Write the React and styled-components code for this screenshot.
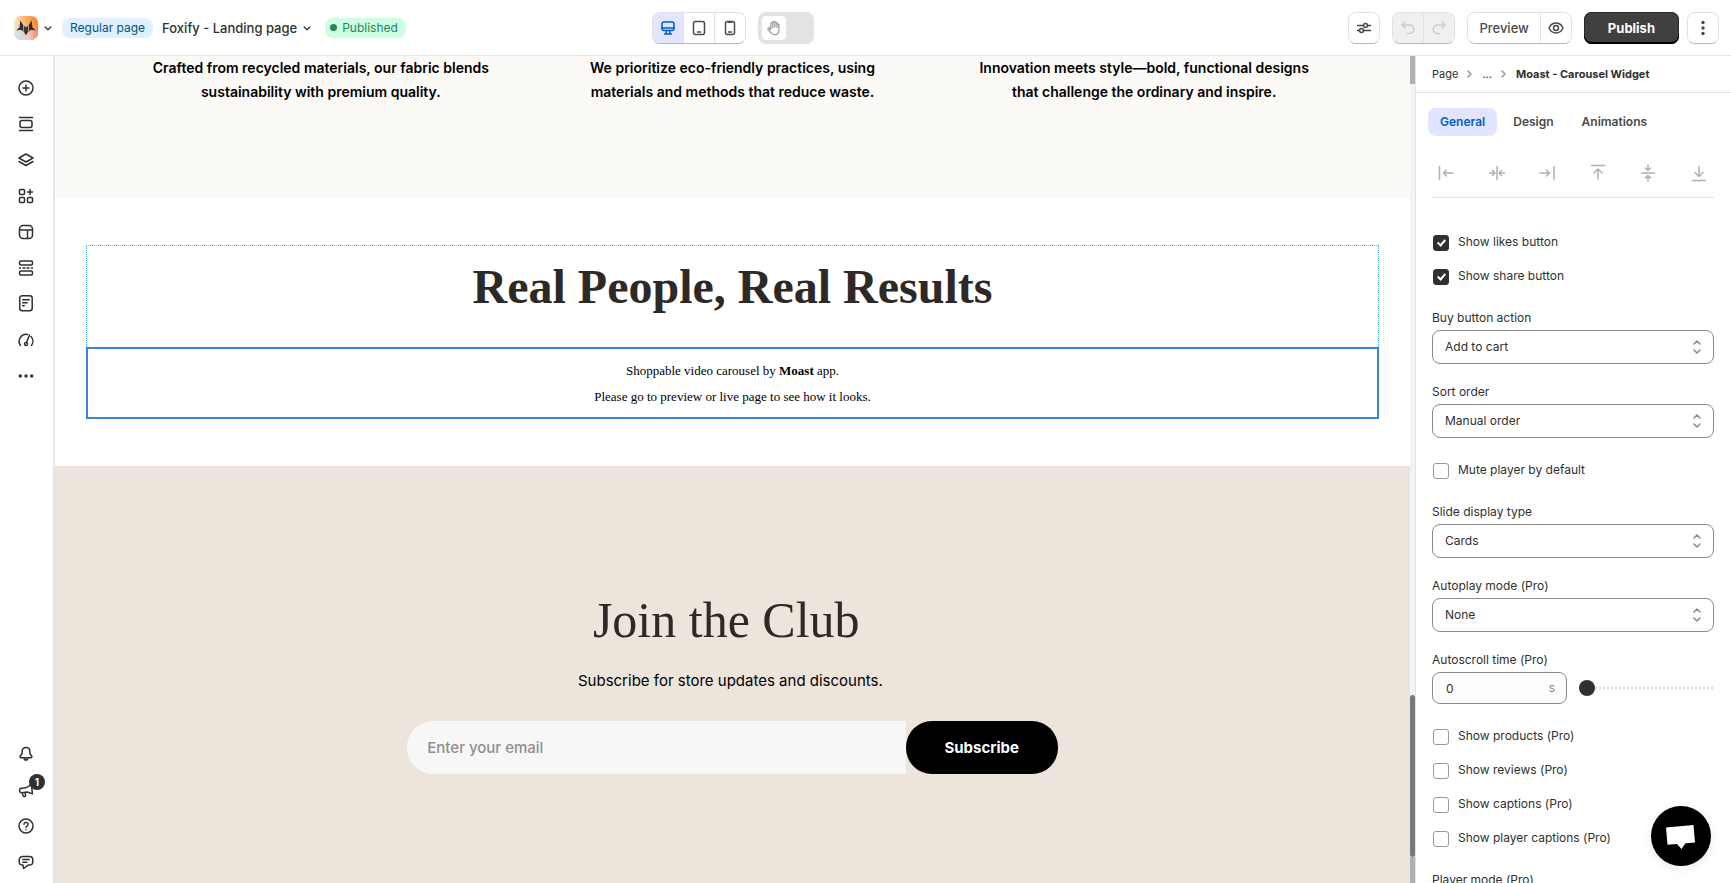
import { useState } from "react";
import styled, { createGlobalStyle } from "styled-components";

const GlobalStyle = createGlobalStyle`
  *, *::before, *::after { box-sizing: border-box; }
  body {
    margin: 0;
    font-family: "Inter", Arial, Helvetica, sans-serif;
    font-size: 12px;
    line-height: 20px;
    color: #303030;
    background: #ffffff;
  }
  button, input, select { font-family: inherit; color: inherit; margin: 0; }
  h1, h2, p { margin: 0; }
`;

const Shell = styled.div`
  display: flex;
  flex-direction: column;
  height: 100vh;
  overflow: hidden;
`;

/* ---------- header ---------- */

const Header = styled.header`
  display: grid;
  grid-template-columns: 12fr auto 17fr;
  align-items: center;
  flex: none;
  height: 56px;
  padding: 0 12px 0 14px;
  border-bottom: 1px solid #e3e3e3;
`;

const HeaderLeft = styled.div`
  display: flex;
  align-items: center;
  gap: 9px;
`;

const HeaderCenter = styled.div`
  display: flex;
  gap: 12px;
`;

const HeaderRight = styled.div`
  display: flex;
  justify-content: flex-end;
  gap: 12px;
`;

const MenuButton = styled.button`
  display: flex;
  align-items: center;
  gap: 5px;
  padding: 0;
  border: 0;
  background: none;
  font-size: 13px;
  font-weight: 500;
  line-height: 20px;
`;

const Pill = styled.span`
  display: flex;
  align-items: center;
  gap: 5px;
  height: 20px;
  margin-left: ${(p) => (p.$tone === "success" ? "4px" : "0")};
  padding: ${(p) => (p.$tone === "success" ? "0 8px 0 5px" : "0 8px")};
  border-radius: 8px;
  font-size: 12px;
  background: ${(p) => (p.$tone === "success" ? "#cdfee1" : "#e0f0ff")};
  color: ${(p) => (p.$tone === "success" ? "#29845a" : "#00527c")};
`;

const Dot = styled.span`
  width: 7px;
  height: 7px;
  border-radius: 50%;
  background: #29845a;
`;

const Group = styled.div`
  display: flex;
  height: 32px;
  border: 1px solid #e0e0e0;
  border-bottom-color: #b5b5b5;
  border-radius: 8px;
  overflow: hidden;
`;

const GroupButton = styled.button`
  display: flex;
  align-items: center;
  justify-content: center;
  min-width: 30px;
  padding: ${(p) => (p.$wide ? "0 11px" : "0")};
  border: 0;
  background: ${(p) => (p.$active ? "#e2e5ff" : p.disabled ? "#f0f0f0" : "#ffffff")};
  color: ${(p) => (p.$active ? "#005bd3" : p.disabled ? "#cccccc" : "#4a4a4a")};
  font-size: 13px;
  font-weight: 500;
  & + & {
    min-width: 31px;
    border-left: 1px solid #e3e3e3;
  }
`;

const HandToggle = styled.button`
  display: flex;
  align-items: center;
  width: 56px;
  height: 32px;
  padding: 4px;
  border: 0;
  border-radius: 8px;
  background: #e3e3e3;
`;

const HandKnob = styled.span`
  display: flex;
  align-items: center;
  justify-content: center;
  width: 24px;
  height: 24px;
  border-radius: 4px;
  background: #ffffff;
  color: #8a8a8a;
`;

const PublishRow = styled.div`
  display: flex;
  gap: 8px;
`;

const PublishButton = styled.button`
  height: 32px;
  padding: 0 24px;
  border: 0;
  border-radius: 8px;
  background: #404040;
  box-shadow: inset 0 -2px 0 #000000, inset 0 0 0 1px #2a2a2a;
  color: #ffffff;
  font-size: 13px;
  font-weight: 700;
`;

/* ---------- body columns ---------- */

const Body = styled.div`
  display: flex;
  flex: 1;
  min-height: 0;
`;

const Rail = styled.nav`
  display: flex;
  flex-direction: column;
  justify-content: space-between;
  flex: none;
  width: 55px;
  padding: 20px 14px 9px;
  border-right: 2px solid #e6e6e8;
`;

const RailGroup = styled.div`
  display: flex;
  flex-direction: column;
  gap: 12px;
`;

const RailButton = styled.button`
  position: relative;
  display: flex;
  width: 24px;
  height: 24px;
  padding: 2px;
  border: 0;
  background: none;
  color: #303030;
`;

const Badge = styled.span`
  position: absolute;
  top: -4px;
  right: -7px;
  width: 16px;
  height: 16px;
  border-radius: 50%;
  background: #303030;
  color: #ffffff;
  font-size: 10px;
  font-weight: 700;
  line-height: 16px;
  text-align: center;
`;

const Canvas = styled.main`
  display: flex;
  flex-direction: column;
  flex: 1;
  min-width: 0;
`;

const Features = styled.section`
  display: grid;
  grid-template-columns: repeat(3, 1fr);
  flex: none;
  padding: 0 60px 94px;
  background: #fbfaf6;
  color: #000000;
  font-size: 14px;
  font-weight: 600;
  line-height: 24px;
  text-align: center;
`;

const Results = styled.section`
  flex: none;
  padding: 47px 31px 47px;
  text-align: center;
`;

const ResultsFrame = styled.div`
  border: 1px dotted #4fb0f5;
  border-bottom: 0;
`;

const SerifTitle = styled.h2`
  color: #2d2926;
  font-family: "Liberation Serif", "Times New Roman", serif;
  font-size: ${(p) => (p.$bold ? "48px" : "50px")};
  font-weight: ${(p) => (p.$bold ? 700 : 400)};
  line-height: 58px;
  padding: ${(p) => (p.$bold ? "12px 0 31px" : "0")};
`;

const WidgetBox = styled.div`
  margin: 0 -1px;
  padding: 9px 0 7px;
  border: 2px solid #3b82e0;
  color: #000000;
  font-family: "Liberation Serif", "Times New Roman", serif;
  font-size: 13px;
  line-height: 26px;
`;

const Club = styled.section`
  display: flex;
  flex-direction: column;
  align-items: center;
  flex: 1;
  padding: 125px 0 0;
  background: #ede5dc;
`;

const ClubText = styled.p`
  margin: 20px 0 28px;
  color: #000000;
  font-size: 15px;
  line-height: 24px;
`;

const ClubForm = styled.form`
  display: flex;
  width: 48%;
  height: 53px;
`;

const EmailInput = styled.input`
  flex: 1;
  min-width: 0;
  padding: 0 20px;
  border: 0;
  border-radius: 26px 0 0 26px;
  background: #f7f7f7;
  font-size: 15px;
  font-weight: 500;
  &::placeholder {
    color: #8f8f8f;
    opacity: 1;
  }
`;

const SubscribeButton = styled.button`
  width: 152px;
  border: 0;
  border-radius: 26px;
  background: #000000;
  color: #ffffff;
  font-size: 15px;
  font-weight: 700;
`;

const ScrollTrack = styled.div`
  display: flex;
  flex-direction: column;
  flex: none;
  width: 5px;
  background: #f3f3f3;
`;

const ScrollThumb = styled.div`
  height: ${(p) => p.$size}px;
  margin-top: ${(p) => (p.$push ? "auto" : "0")};
  border-radius: ${(p) => (p.$dark ? "3px" : "0")};
  background: ${(p) => (p.$dark ? "#7a7a7a" : "#b0b0b0")};
`;

/* ---------- settings panel ---------- */

const Panel = styled.aside`
  flex: none;
  width: 316px;
  overflow: hidden;
  border-left: 1px solid #e3e3e3;
`;

const Breadcrumb = styled.nav`
  display: flex;
  align-items: center;
  gap: 9px;
  height: 37px;
  padding: 0 16px;
  border-bottom: 1px solid #e3e3e3;
  font-size: 11px;
  a {
    color: #303030;
    text-decoration: none;
  }
`;

const Tabs = styled.div`
  display: flex;
  gap: 4px;
  padding: 15px 12px 0;
`;

const Tab = styled.button`
  height: 28px;
  padding: 0 12px 2px;
  border: 0;
  border-radius: 8px;
  background: ${(p) => (p.$active ? "#e2e5ff" : "none")};
  color: ${(p) => (p.$active ? "#005bd3" : "#4a4a4a")};
  font-size: 12px;
  font-weight: 600;
`;

const AlignRow = styled.div`
  display: flex;
  justify-content: space-between;
  margin: 25px 17px 0 16px;
  padding: 2px 5px 14px 4px;
  border-bottom: 1px solid #e3e3e3;
`;

const AlignButton = styled.button`
  display: flex;
  padding: 0;
  border: 0;
  background: none;
  color: #b0b0b0;
`;

const Fields = styled.div`
  display: flex;
  flex-direction: column;
  gap: 18px;
  padding: 30px 17px 0 16px;
`;

const CheckGroup = styled.div`
  display: flex;
  flex-direction: column;
  gap: 14px;
  padding: 5px 0 3px;
`;

const CheckLabel = styled.label`
  display: flex;
  align-items: flex-start;
  gap: 9px;
  height: 20px;
  padding-left: 1px;
  line-height: 18px;
`;

const Checkbox = styled.input`
  appearance: none;
  display: grid;
  place-items: center;
  width: 16px;
  height: 16px;
  border: 1px solid #9a9a9a;
  border-radius: 3px;
  background: #ffffff;
  ${CheckLabel} & {
    margin-top: 2px;
  }
  &:checked {
    border-color: #303030;
    background: #303030;
  }
  &:checked::after {
    content: "";
    width: 5px;
    height: 8px;
    border: solid #ffffff;
    border-width: 0 2px 2px 0;
    transform: translateY(-1px) rotate(42deg);
  }
`;

const FieldBox = styled.div`
  display: flex;
  flex-direction: column;
  gap: 2px;
`;

const SelectWrap = styled.div`
  position: relative;
  svg {
    position: absolute;
    top: 10px;
    right: 12px;
    color: #8a8a8a;
    pointer-events: none;
  }
`;

const Select = styled.select`
  appearance: none;
  display: block;
  width: 100%;
  height: 34px;
  padding: 0 12px 2px;
  border: 1px solid #8a8a8a;
  border-radius: 8px;
  background: #ffffff;
  font-size: 12px;
`;

const RangeRow = styled.div`
  display: flex;
  align-items: center;
  gap: 12px;
`;

const NumberBox = styled.div`
  display: flex;
  align-items: center;
  width: 135px;
  height: 32px;
  padding: 0 11px 0 12px;
  border: 1px solid #8a8a8a;
  border-radius: 8px;
  background: #fdfdfd;
  color: #8a8a8a;
`;

const NumberInput = styled.input`
  flex: 1;
  min-width: 0;
  padding: 0 1px;
  border: 0;
  background: none;
  color: #303030;
  font-size: 12px;
`;

const Slider = styled.input`
  appearance: none;
  flex: 1;
  min-width: 0;
  height: 16px;
  background: repeating-linear-gradient(90deg, #e3e3e3 0 2px, transparent 2px 4px) center / 100% 4px no-repeat;
  &::-webkit-slider-thumb {
    appearance: none;
    width: 16px;
    height: 16px;
    border-radius: 50%;
    background: #303030;
  }
`;

const ChatButton = styled.button`
  position: fixed;
  right: 20px;
  bottom: 17px;
  width: 60px;
  height: 60px;
  padding: 0;
  border: 0;
  border-radius: 50%;
  background: #000000;
  box-shadow: 0 2px 8px rgba(0, 0, 0, 0.1);
`;

/* ---------- icons ---------- */

const Icon = ({ size = 20, width = 1.5, children }) => (
  <svg
    width={size}
    height={size}
    viewBox="0 0 20 20"
    fill="none"
    stroke="currentColor"
    strokeWidth={width}
    strokeLinecap="round"
    strokeLinejoin="round"
    aria-hidden="true"
  >
    {children}
  </svg>
);

const Chevron = () => (
  <svg width="10" height="10" viewBox="0 0 10 10" fill="none" stroke="currentColor" strokeWidth="1.3" strokeLinecap="round" strokeLinejoin="round">
    <path d="M2.200 4L5 6.800 7.800 4" />
  </svg>
);

const CrumbChevron = () => (
  <svg width="6" height="10" viewBox="0 0 6 10" fill="none" stroke="#8a8a8a" strokeWidth="1.3" strokeLinecap="round" strokeLinejoin="round">
    <path d="M1 2l3 3-3 3" />
  </svg>
);

const SelectArrows = () => (
  <svg width="10" height="14" viewBox="0 0 10 14" fill="none" stroke="currentColor" strokeWidth="1.5" strokeLinecap="round" strokeLinejoin="round">
    <path d="M2 4l3-3 3 3M2 10l3 3 3-3" />
  </svg>
);

const FoxLogo = () => (
  <svg width="24" height="24" viewBox="0 0 24 24" aria-hidden="true">
    <defs>
      <linearGradient id="foxTop" x1="0" y1="0.3" x2="1" y2="0.1">
        <stop offset="0" stopColor="#fbe9cc" />
        <stop offset="0.5" stopColor="#fbb266" />
        <stop offset="1" stopColor="#fb7d1e" />
      </linearGradient>
      <linearGradient id="foxBottom" x1="0" y1="0" x2="1" y2="0">
        <stop offset="0" stopColor="#bfe3f7" />
        <stop offset="0.6" stopColor="#e6cfd6" />
        <stop offset="1" stopColor="#f58d78" />
      </linearGradient>
      <linearGradient id="foxFade" x1="0" y1="0" x2="0" y2="1">
        <stop offset="0.3" stopColor="#000000" />
        <stop offset="0.9" stopColor="#ffffff" />
      </linearGradient>
      <mask id="foxMask">
        <rect width="24" height="24" fill="url(#foxFade)" />
      </mask>
    </defs>
    <rect width="24" height="24" rx="7" fill="url(#foxTop)" />
    <rect width="24" height="24" rx="7" fill="url(#foxBottom)" mask="url(#foxMask)" />
    <path d="M6.300 4.500L9.500 9.500V15.700L7 13.700 2.200 14.600 5.600 11.200zM17.700 4.500L14.500 9.500V15.700L17 13.700 21.800 14.600 18.400 11.200z" fill="#2f2f31" />
    <path d="M10 9.500L12 11.500 14 9.500 14.600 15 12 19.300 9.400 15z" fill="#2f2f31" />
    <path d="M9.700 9.500v6M14.300 9.500v6" stroke="#f3c09a" strokeWidth="0.7" />
  </svg>
);

const railIcons = [
  {
    label: "Add element",
    icon: <><circle cx="10" cy="10" r="7" /><path d="M10 7v6M7 10h6" /></>,
  },
  {
    label: "Sections",
    icon: <><rect x="4" y="6.500" width="12" height="7" rx="2" /><path d="M3.500 3.500h13M3.500 16.500h13" /></>,
  },
  {
    label: "Layers",
    icon: <><path d="M10 4l7 4-7 4-7-4z" /><path d="M3 11.500l7 4 7-4" /></>,
  },
  {
    label: "Apps",
    icon: (
      <>
        <rect x="3.500" y="3.500" width="5" height="5" rx="1" />
        <rect x="3.500" y="11.500" width="5" height="5" rx="1" />
        <rect x="11.500" y="11.500" width="5" height="5" rx="1" />
        <path d="M14 3.500v5M11.500 6h5" />
      </>
    ),
  },
  {
    label: "Layout",
    icon: <><rect x="3.500" y="3.500" width="13" height="13" rx="3.500" /><path d="M3.500 8h13M11.500 8v8.500" /></>,
  },
  {
    label: "Page sections",
    icon: (
      <>
        <rect x="3.500" y="3" width="13" height="4" rx="1.500" />
        <rect x="3.500" y="13" width="13" height="4" rx="1.500" />
        <path d="M3.500 10h1M7 10h2M11 10h2M15.500 10h1" />
      </>
    ),
  },
  {
    label: "Page content",
    icon: <><rect x="3.700" y="1.800" width="12.500" height="15" rx="2.500" /><path d="M6.700 5.800h6.500M6.700 8.800h4.500M6.700 11.800h1.500" /></>,
  },
  {
    label: "Performance",
    icon: <><path d="M4.500 15.500A7 7 0 0 1 11.500 4.500M15 6.500a7 7 0 0 1 .5 9" /><circle cx="10" cy="14" r="1.500" /><path d="M10.500 12.500l3-7.500" /></>,
  },
  {
    label: "More",
    icon: (
      <g fill="currentColor" stroke="none">
        <circle cx="4.300" cy="10" r="1.700" />
        <circle cx="10" cy="10" r="1.700" />
        <circle cx="15.700" cy="10" r="1.700" />
      </g>
    ),
  },
];

const railFooterIcons = [
  {
    label: "Notifications",
    icon: <path d="M10 3.500c-2.300 0-3.800 1.700-3.900 4l-.1 2.200-1.800 2.500c-.4.700 0 1.600.8 1.600h10c.8 0 1.200-.9.800-1.600L14 9.700l-.1-2.200c-.1-2.300-1.600-4-3.900-4zM8.200 14.200a1.800 1.800 0 0 0 3.600 0" />,
  },
  {
    label: "News",
    badge: 1,
    icon: <path d="M16 4v10.500l-5-2.300H5.500a2 2 0 0 1-2-2v-.4a2 2 0 0 1 2-2H9c3 0 5-1.500 7-3.800zM6 12.500l.5 3c.2 1.200 2.500 1.200 2.500-.3v-2.700" transform="rotate(-6 10 10)" />,
  },
  {
    label: "Help",
    icon: <><circle cx="10" cy="10" r="7" /><path d="M8 8.300a2 2 0 1 1 3 1.800c-.7.400-1 .7-1 1.400M10 13.700v.1" /></>,
  },
  {
    label: "Feedback",
    icon: <><path d="M6.500 4.500h7a3.300 3.300 0 0 1 3.300 3.300v2a3.300 3.300 0 0 1-3.300 3.300h-1.300L7.500 16.500 7 13.100h-.5a3.300 3.300 0 0 1-3.300-3.300v-2a3.300 3.300 0 0 1 3.300-3.300z" /><path d="M6.800 7.500h6.400M6.800 10.200h4" /></>,
  },
];

const deviceIcons = [
  {
    label: "Desktop",
    icon: <><rect x="4" y="4" width="12" height="8.500" rx="2" /><path d="M4 10h12M8.500 12.500L8 16M11.500 12.500l.5 3.500M6.500 16h7" /></>,
  },
  {
    label: "Tablet",
    icon: <><rect x="4.500" y="3.500" width="11" height="13" rx="2" /><path d="M8.500 14h3" /></>,
  },
  {
    label: "Mobile",
    icon: <><rect x="5.500" y="3.500" width="9" height="13" rx="2" /><path d="M8.500 14h3M8.500 4.200h3" /></>,
  },
];

const alignIcons = [
  { label: "Align left", icon: <path d="M3.500 3.500v13M7.500 10h9.500M10.500 7l-3 3 3 3" /> },
  { label: "Align center", icon: <path d="M10 3.500v13M2.500 10h5M5.500 7.500L8 10l-2.500 2.500M17.500 10h-5M14.500 7.500L12 10l2.500 2.500" /> },
  { label: "Align right", icon: <path d="M17 3.500v13M3 10h9.500M9.500 7l3 3-3 3" /> },
  { label: "Align top", icon: <path d="M3.500 2.500h13M10 16V6.500M6 10l4-4 4 4" /> },
  { label: "Align middle", icon: <path d="M3.500 10h13M10 2v5M7.500 5L10 7.500 12.500 5M10 18v-5M7.500 15l2.500-2.500 2.500 2.500" /> },
  { label: "Align bottom", icon: <path d="M3.500 17.500h13M10 3.500v9.500M6 9.500l4 4 4-4" /> },
];

/* ---------- small components ---------- */

const CheckField = ({ label, defaultChecked = false }) => (
  <CheckLabel>
    <Checkbox type="checkbox" defaultChecked={defaultChecked} />
    {label}
  </CheckLabel>
);

const SelectField = ({ id, label, value }) => (
  <FieldBox>
    <label htmlFor={id}>{label}</label>
    <SelectWrap>
      <Select id={id} defaultValue={value}>
        <option>{value}</option>
      </Select>
      <SelectArrows />
    </SelectWrap>
  </FieldBox>
);

const RailItem = ({ label, icon, badge }) => (
  <RailButton aria-label={label}>
    <Icon>{icon}</Icon>
    {badge ? <Badge>{badge}</Badge> : null}
  </RailButton>
);

const TopBar = () => {
  const [device, setDevice] = useState("Desktop");
  return (
    <Header>
      <HeaderLeft>
        <MenuButton aria-label="Foxify menu">
          <FoxLogo />
          <Chevron />
        </MenuButton>
        <Pill>Regular page</Pill>
        <MenuButton>
          Foxify - Landing page
          <Chevron />
        </MenuButton>
        <Pill $tone="success">
          <Dot />
          Published
        </Pill>
      </HeaderLeft>
      <HeaderCenter>
        <Group>
          {deviceIcons.map((d) => (
            <GroupButton key={d.label} aria-label={d.label} $active={device === d.label} onClick={() => setDevice(d.label)}>
              <Icon>{d.icon}</Icon>
            </GroupButton>
          ))}
        </Group>
        <HandToggle aria-label="Hand tool">
          <HandKnob>
            <Icon size={18} width={1.2}>
              <path d="M6.500 11V5.200a1.100 1.100 0 0 1 2.200 0V9.500M8.700 9V3.700a1.100 1.100 0 0 1 2.300 0V9M11 9V4.500a1.100 1.100 0 0 1 2.300 0V9.500M13.300 9.500V6.500a1.100 1.100 0 0 1 2.200 0V12c0 3.500-2 5.500-4.800 5.500-2.500 0-3.700-1-4.900-3L3.300 11.200c-.5-1.200.8-2 1.700-1.200l1.500 1.800" />
            </Icon>
          </HandKnob>
        </HandToggle>
      </HeaderCenter>
      <HeaderRight>
        <Group>
          <GroupButton aria-label="Settings">
            <Icon>
              <path d="M3.500 7.500h6M13.500 7.500h3M3.500 12.500h2M9.500 12.500h7" />
              <circle cx="11.500" cy="7.500" r="2" />
              <circle cx="7.500" cy="12.500" r="2" />
            </Icon>
          </GroupButton>
        </Group>
        <Group>
          <GroupButton aria-label="Undo" disabled>
            <Icon><path d="M7 4L4 7l3 3M4 7h7.500a4.200 4.200 0 0 1 0 8.500H9.500" /></Icon>
          </GroupButton>
          <GroupButton aria-label="Redo" disabled>
            <Icon><path d="M13 4l3 3-3 3M16 7H8.500a4.200 4.200 0 0 0 0 8.500h2" /></Icon>
          </GroupButton>
        </Group>
        <Group>
          <GroupButton $wide>Preview</GroupButton>
          <GroupButton aria-label="View live page">
            <Icon>
              <path d="M3 10c1.500-3.200 4-5 7-5s5.500 1.800 7 5c-1.500 3.200-4 5-7 5s-5.500-1.800-7-5z" />
              <circle cx="10" cy="10" r="2.500" />
            </Icon>
          </GroupButton>
        </Group>
        <PublishRow>
          <PublishButton>Publish</PublishButton>
          <Group>
            <GroupButton aria-label="More actions">
              <Icon>
                <g fill="currentColor" stroke="none">
                  <circle cx="10" cy="4.500" r="1.700" />
                  <circle cx="10" cy="10" r="1.700" />
                  <circle cx="10" cy="15.500" r="1.700" />
                </g>
              </Icon>
            </GroupButton>
          </Group>
        </PublishRow>
      </HeaderRight>
    </Header>
  );
};

const PagePreview = () => (
  <Canvas>
    <Features>
      <p>
        Crafted from recycled materials, our fabric blends
        <br />
        sustainability with premium quality.
      </p>
      <p>
        We prioritize eco-friendly practices, using
        <br />
        materials and methods that reduce waste.
      </p>
      <p>
        Innovation meets style—bold, functional designs
        <br />
        that challenge the ordinary and inspire.
      </p>
    </Features>
    <Results>
      <ResultsFrame>
        <SerifTitle $bold>Real People, Real Results</SerifTitle>
        <WidgetBox>
          <p>
            Shoppable video carousel by <b>Moast</b> app.
          </p>
          <p>Please go to preview or live page to see how it looks.</p>
        </WidgetBox>
      </ResultsFrame>
    </Results>
    <Club>
      <SerifTitle>Join the Club&nbsp;</SerifTitle>
      <ClubText>Subscribe for store updates and discounts.&nbsp;</ClubText>
      <ClubForm onSubmit={(e) => e.preventDefault()}>
        <EmailInput type="email" placeholder="Enter your email" aria-label="Enter your email" />
        <SubscribeButton type="submit">Subscribe</SubscribeButton>
      </ClubForm>
    </Club>
  </Canvas>
);

const SettingsPanel = () => {
  const [tab, setTab] = useState("General");
  const [time, setTime] = useState(0);
  return (
    <Panel>
      <Breadcrumb aria-label="Breadcrumb">
        <a href="#page">Page</a>
        <CrumbChevron />
        <a href="#parents">...</a>
        <CrumbChevron />
        <b>Moast - Carousel Widget</b>
      </Breadcrumb>
      <Tabs>
        {["General", "Design", "Animations"].map((name) => (
          <Tab key={name} $active={tab === name} onClick={() => setTab(name)}>
            {name}
          </Tab>
        ))}
      </Tabs>
      <AlignRow>
        {alignIcons.map((a) => (
          <AlignButton key={a.label} aria-label={a.label}>
            <Icon>{a.icon}</Icon>
          </AlignButton>
        ))}
      </AlignRow>
      <Fields>
        <CheckGroup>
          <CheckField label="Show likes button" defaultChecked />
          <CheckField label="Show share button" defaultChecked />
        </CheckGroup>
        <SelectField id="buy-action" label="Buy button action" value="Add to cart" />
        <SelectField id="sort-order" label="Sort order" value="Manual order" />
        <CheckGroup>
          <CheckField label="Mute player by default" />
        </CheckGroup>
        <SelectField id="slide-type" label="Slide display type" value="Cards" />
        <SelectField id="autoplay" label="Autoplay mode (Pro)" value="None" />
        <FieldBox>
          <label htmlFor="autoscroll">Autoscroll time (Pro)</label>
          <RangeRow>
            <NumberBox>
              <NumberInput id="autoscroll" value={time} onChange={(e) => setTime(e.target.value)} />s
            </NumberBox>
            <Slider type="range" min="0" max="60" value={time} aria-label="Autoscroll time" onChange={(e) => setTime(e.target.value)} />
          </RangeRow>
        </FieldBox>
        <CheckGroup>
          <CheckField label="Show products (Pro)" />
          <CheckField label="Show reviews (Pro)" />
          <CheckField label="Show captions (Pro)" />
          <CheckField label="Show player captions (Pro)" />
        </CheckGroup>
        <SelectField id="player-mode" label="Player mode (Pro)" value="Popup" />
      </Fields>
    </Panel>
  );
};

export default function App() {
  return (
    <>
      <GlobalStyle />
      <Shell>
        <TopBar />
        <Body>
          <Rail>
            <RailGroup>
              {railIcons.map((item) => (
                <RailItem key={item.label} {...item} />
              ))}
            </RailGroup>
            <RailGroup>
              {railFooterIcons.map((item) => (
                <RailItem key={item.label} {...item} />
              ))}
            </RailGroup>
          </Rail>
          <PagePreview />
          <ScrollTrack>
            <ScrollThumb $size={28} />
            <ScrollThumb $size={162} $push $dark />
            <ScrollThumb $size={26} />
          </ScrollTrack>
          <SettingsPanel />
        </Body>
      </Shell>
      <ChatButton aria-label="Open chat">
        <svg width="60" height="60" viewBox="0 0 60 60" fill="#ffffff">
          <path d="M15 21.500L42.500 19l1.500 17.500-9.500.8-4 5.700-4.500-5-9.500.8z" />
        </svg>
      </ChatButton>
    </>
  );
}
